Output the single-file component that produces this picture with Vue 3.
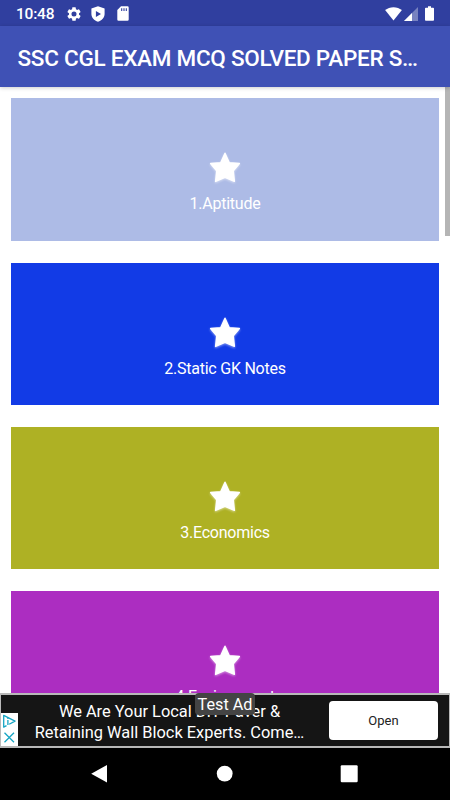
<template>
  <div class="screen">
    <header class="status-bar">
      <span class="clock">10:48</span>
      <svg class="icon icon--gear" viewBox="2 2 20 20">
        <path fill="#fff" d="M19.14 12.94c.04-.3.06-.61.06-.94 0-.32-.02-.64-.07-.94l2.03-1.58a.49.49 0 0 0 .12-.61l-1.92-3.32a.488.488 0 0 0-.59-.22l-2.39.96c-.5-.38-1.03-.7-1.62-.94l-.36-2.54a.484.484 0 0 0-.48-.41h-3.84c-.24 0-.43.17-.47.41l-.36 2.54c-.59.24-1.13.57-1.62.94l-2.39-.96c-.22-.08-.47 0-.59.22L2.74 8.87c-.12.21-.08.47.12.61l2.03 1.58c-.05.3-.09.63-.09.94s.02.64.07.94l-2.03 1.58a.49.49 0 0 0-.12.61l1.92 3.32c.12.22.37.29.59.22l2.39-.96c.5.38 1.03.7 1.62.94l.36 2.54c.05.24.24.41.48.41h3.84c.24 0 .44-.17.47-.41l.36-2.54c.59-.24 1.13-.56 1.62-.94l2.39.96c.22.08.47 0 .59-.22l1.92-3.32c.12-.22.07-.47-.12-.61l-2.01-1.58zM12 15.6a3.6 3.6 0 1 1 0-7.2 3.6 3.6 0 0 1 0 7.2z" />
      </svg>
      <svg class="icon icon--shield" viewBox="0 0 14 16">
        <path fill="#fff" fill-rule="evenodd" d="M7 .2 13.600 2.600V8c0 3.700-2.800 6.400-6.600 7.700C3.200 14.400.400 11.700.400 8V2.600zM4.900 4.900v6L10 7.900z" />
      </svg>
      <svg class="icon icon--card" viewBox="0 0 12 15">
        <path fill="#fff" d="M4 .3h6.500A1.200 1.200 0 0 1 11.700 1.500v12a1.200 1.200 0 0 1-1.200 1.200h-9A1.200 1.200 0 0 1 .3 13.500V4z" />
        <path stroke="#303f9f" stroke-width="1.100" d="M4.700 2.300v2.600M7 2.300v2.600M9.300 2.300v2.600" />
      </svg>
      <span class="spacer" />
      <svg class="icon icon--wifi" viewBox="0 0 17 14">
        <path fill="#fff" d="M8.500 13.500.1 3.100C2.500 1.200 5.300.2 8.500.2s6 1 8.400 2.900z" />
      </svg>
      <svg class="icon icon--signal" viewBox="0 0 14 14">
        <path fill="#fff" fill-opacity=".35" d="M14 0v14H0z" />
        <path fill="#fff" d="M8 6v8H0z" />
      </svg>
      <svg class="icon icon--battery" viewBox="0 0 9 15">
        <path fill="#fff" d="M3 .2h3v1.500h2.200c.4 0 .8.3.8.800v11.500c0 .5-.4.800-.8.800H.8c-.4 0-.8-.3-.8-.8V2.500c0-.5.4-.8.8-.8H3z" />
      </svg>
    </header>

    <div class="toolbar">
      <h1 class="toolbar-title">SSC CGL EXAM MCQ SOLVED PAPER S…</h1>
    </div>

    <main class="list">
      <section
        v-for="item in items"
        :key="item.label"
        class="card"
        :class="`card--${item.color}`"
      >
        <svg class="star" viewBox="0 0 32 32">
          <path
            fill="#fff"
            stroke="#fff"
            stroke-width="1.400"
            stroke-linejoin="round"
            d="M16 1.200 20.300 10.700 30.400 11.500 24.300 18.900 25.400 29.400 16 25.300 6.600 29.400 7.700 18.900 1.600 11.500 11.700 10.700z"
          />
        </svg>
        <span class="card-label">{{ item.label }}</span>
      </section>
      <div class="scrollbar" />
    </main>

    <aside class="ad">
      <div class="ad-body">
        <p class="ad-text">
          <span class="ad-line">We Are Your Local DIY Paver &amp;</span>
          <span class="ad-line">Retaining Wall Block Experts. Come…</span>
        </p>
        <button class="ad-button">Open</button>
      </div>
      <div class="ad-choices">
        <svg class="ad-choices-icon" viewBox="0 0 16 32">
          <g fill="none" stroke="#16a5c4" stroke-width="1.300" stroke-linejoin="round">
            <path d="M5.500 12.600 2.700 14.100V2.300L14 8.100 8.200 11.300" />
            <path d="M6.900 7.100v5M6.900 4.600v1.300" />
            <path d="m3.500 19.800 9.500 9.500M13 19.800 3.500 29.300" />
          </g>
        </svg>
      </div>
      <span class="ad-badge">Test Ad</span>
    </aside>

    <nav class="nav-bar">
      <svg class="nav-icon" viewBox="0 0 18 18"><path fill="#fff" d="M1.200 8.800 17 .1v17.400z" /></svg>
      <svg class="nav-icon" viewBox="0 0 18 18"><circle cx="9.700" cy="8.600" r="7.900" fill="#fff" /></svg>
      <svg class="nav-icon" viewBox="0 0 18 18"><rect x=".7" y=".2" width="17" height="17" rx="1.200" fill="#fff" /></svg>
    </nav>
  </div>
</template>

<script setup>
const items = [
  { label: '1.Aptitude', color: 'periwinkle' },
  { label: '2.Static GK Notes', color: 'blue' },
  { label: '3.Economics', color: 'olive' },
  { label: '4.Environment', color: 'purple' },
]
</script>

<style>
body {
  overflow: hidden;
  background: #fff;
}
</style>

<style scoped>
.screen {
  display: flex;
  flex-direction: column;
  width: 450px;
  height: 800px;
  overflow: hidden;
  background: #fff;
  font-family: Roboto, 'Liberation Sans', sans-serif;
  color: #fff;
}

.status-bar {
  display: flex;
  align-items: center;
  flex-shrink: 0;
  box-sizing: border-box;
  height: 26px;
  padding: 1px 15px 0 16px;
  background: #303f9f;
}

.clock {
  width: 51px;
  font-size: 15.5px;
  font-weight: 500;
  line-height: 26px;
  letter-spacing: -0.2px;
}

.icon { display: block; flex-shrink: 0; }
.icon--gear    { width: 14px; height: 14px; }
.icon--shield  { width: 14px; height: 16px; margin-left: 10px; }
.icon--card    { width: 12px; height: 15px; margin-left: 12px; }
.icon--wifi    { width: 17px; height: 14px; margin-right: 2px; }
.icon--signal  { width: 14px; height: 14px; margin: 1px 7px 0 0; }
.icon--battery { width: 9px; height: 15px; margin-right: 1px; }

.spacer { flex: 1; }

.toolbar {
  position: relative;
  z-index: 1;
  flex-shrink: 0;
  height: 61px;
  padding: 0 17.5px;
  background: #3f51b5;
  box-shadow: 0 1px 4px rgba(0, 0, 0, 0.2);
}

.toolbar-title {
  margin: 0;
  font-size: 22.5px;
  font-weight: 500;
  line-height: 64px;
  letter-spacing: -0.26px;
  white-space: nowrap;
}

.list {
  position: relative;
  display: flex;
  flex: 1;
  flex-direction: column;
  gap: 21.9px;
  min-height: 0;
  padding: 11.4px 11px 0;
  overflow: hidden;
}

.card {
  display: flex;
  flex-direction: column;
  align-items: center;
  flex-shrink: 0;
  box-sizing: border-box;
  height: 142.3px;
  padding-top: 54px;
}

.card--periwinkle { background: #adbbe6; }
.card--blue       { background: #123be6; }
.card--olive      { background: #aeb124; }
.card--purple     { background: #ac2dc1; }

.star {
  width: 32px;
  height: 32px;
  filter: drop-shadow(0 1px 1px rgba(255, 255, 255, 0.5));
}

.card-label {
  margin-top: 9px;
  font-size: 16px;
  line-height: 21px;
  letter-spacing: -0.23px;
}

.scrollbar {
  position: absolute;
  top: 0;
  right: 0;
  width: 5px;
  height: 149px;
  background: #b5b5b5;
}

.ad {
  position: relative;
  flex-shrink: 0;
  box-sizing: border-box;
  height: 55px;
  padding: 2px 1px;
  background: #b9b9b9;
}

.ad-body {
  display: flex;
  align-items: center;
  height: 51px;
  background: #151515;
}

.ad-text {
  width: 328px;
  margin: 0;
  padding-top: 2px;
  text-align: center;
}

.ad-line {
  display: block;
  padding-left: 9px;
  font-size: 16.4px;
  line-height: 21px;
  white-space: nowrap;
}

.ad-button {
  width: 109px;
  height: 39px;
  padding: 0;
  border: 0;
  border-radius: 4px;
  background: #fff;
  color: #222;
  font-family: inherit;
  font-size: 13px;
}

.ad-choices {
  position: absolute;
  left: 1px;
  bottom: 2px;
  width: 17px;
  height: 33px;
  background: #fff;
}

.ad-choices-icon {
  display: block;
  width: 16px;
  height: 32px;
}

.ad-badge {
  position: absolute;
  top: 0;
  left: 195px;
  width: 60px;
  height: 22px;
  border-radius: 4px;
  background: #444;
  font-size: 16.2px;
  line-height: 24px;
  text-align: center;
}

.nav-bar {
  display: flex;
  align-items: center;
  justify-content: space-between;
  flex-shrink: 0;
  box-sizing: border-box;
  height: 52px;
  padding: 0 92px 0 90px;
  background: #000;
}

.nav-icon {
  width: 18px;
  height: 18px;
}
</style>
